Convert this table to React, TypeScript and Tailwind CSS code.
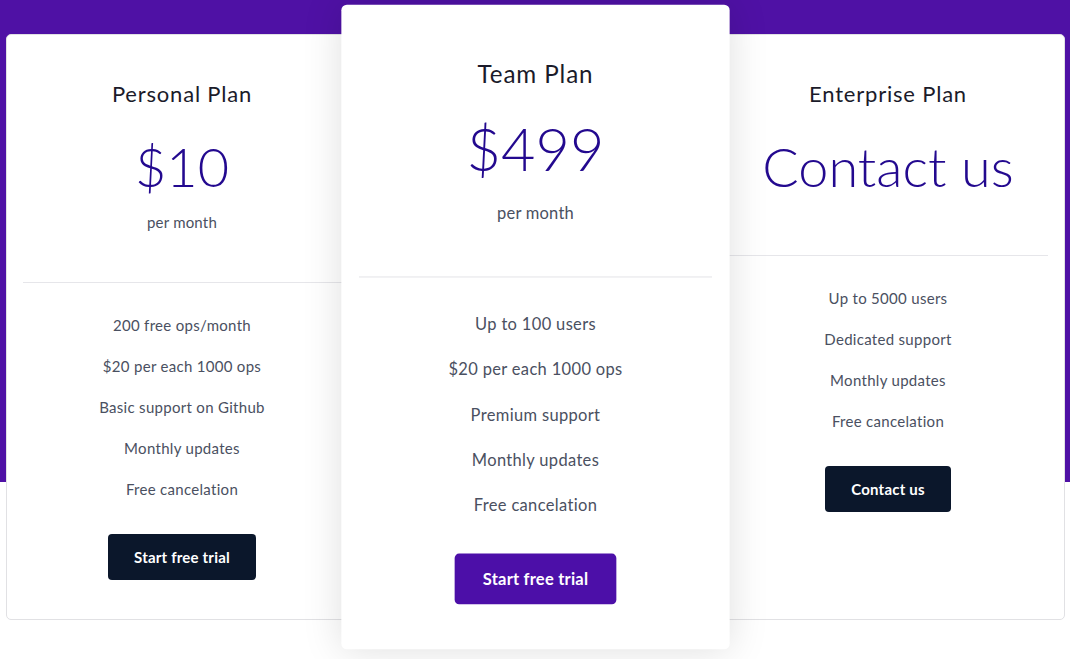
import React from 'react';

type Plan = {
  name: string;
  price: string;
  period?: string;
  features: string[];
  cta: string;
  featured?: boolean;
};

const plans: Plan[] = [
  {
    name: 'Personal Plan',
    price: '$10',
    period: 'per month',
    features: ['200 free ops/month', '$20 per each 1000 ops', 'Basic support on Github', 'Monthly updates', 'Free cancelation'],
    cta: 'Start free trial'
  },
  {
    name: 'Team Plan',
    price: '$499',
    period: 'per month',
    features: ['Up to 100 users', '$20 per each 1000 ops', 'Premium support', 'Monthly updates', 'Free cancelation'],
    cta: 'Start free trial',
    featured: true
  },
  {
    name: 'Enterprise Plan',
    price: 'Contact us',
    features: ['Up to 5000 users', 'Dedicated support', 'Monthly updates', 'Free cancelation'],
    cta: 'Contact us'
  }
];

const PlanCard: React.FC<{ plan: Plan }> = ({ plan }) => {
  const cardClass = plan.featured
    ? 'relative z-10 scale-110 rounded-[5px] bg-white shadow-[0_0_36px_rgba(0,0,0,0.13)]'
    : 'relative rounded-[5px] border border-[#e1e1e4] bg-white';

  // header spacing differs a little between the featured card and the others
  const headerPad = plan.featured ? 'pt-[48px] pb-[47px]' : plan.period ? 'pt-[44px] pb-[49px]' : 'pt-[44px] pb-[56px]';

  return (
    <div className={`${cardClass} flex w-[353px] shrink-0 flex-col items-center pb-[39px]`}>
      {/* Header */}
      <div className={`flex w-full flex-col items-center ${headerPad}`}>
        <h3 className="text-[22px] leading-[30px] tracking-[0.8px] text-[#1b1b2a]">{plan.name}</h3>
        <div className={`${plan.featured ? 'mt-[20px]' : 'mt-[25px]'} text-[54px] font-light leading-[65px] text-[#23098f]`}>
          {plan.price}
        </div>
        {plan.period && (
          <p className={`${plan.featured ? 'mt-[15px]' : 'mt-[12px]'} text-[15px] leading-[22px] tracking-[0.2px] text-[#4a5061]`}>
            {plan.period}
          </p>
        )}
      </div>

      <div className="mx-4 h-px self-stretch bg-[#e6e6ea]" />

      {/* Features */}
      <ul className="mt-[31px] flex flex-col items-center gap-[19px]">
        {plan.features.map((f) => (
          <li key={f} className="text-[15px] leading-[22px] tracking-[0.3px] text-[#4a5061]">
            {f}
          </li>
        ))}
      </ul>

      <button
        className={`mt-[34px] h-[46px] rounded-[4px] px-[26px] text-[15px] font-bold tracking-[0.2px] text-white ${
          plan.featured ? 'bg-[#4c0fa8]' : 'bg-[#0b172b]'
        }`}
      >
        {plan.cta}
      </button>
    </div>
  );
};

const App: React.FC = () => {
  return (
    <div
      className="min-h-[659px] w-full bg-[linear-gradient(to_bottom,#4f11a5_0px,#4f11a5_482px,#ffffff_482px)] px-[5px] pt-[34px]"
      style={{ fontFamily: 'Lato, "Open Sans", sans-serif' }}
    >
      <div className="flex items-stretch justify-center">
        {plans.map((plan) => (
          <PlanCard key={plan.name} plan={plan} />
        ))}
      </div>
    </div>
  );
};

export default App;
